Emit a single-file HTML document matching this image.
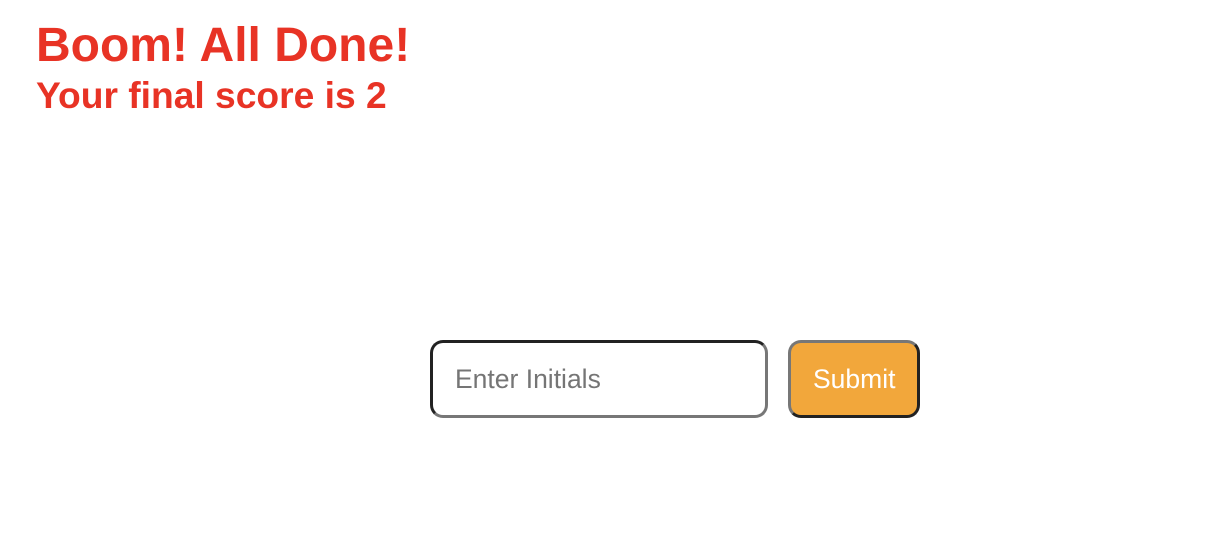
<!DOCTYPE html>
<html><head><meta charset="utf-8"><style>
html,body{margin:0;padding:0;background:#fff;width:1214px;height:542px;overflow:hidden;font-family:"Liberation Sans",Arial,sans-serif;}
h1,h2{position:absolute;left:36px;margin:0;color:#e83325;font-weight:bold;white-space:nowrap;}
h1{font-size:48px;top:18px;line-height:56px;}
h2{font-size:37.2px;top:73px;line-height:44px;}
.inp{position:absolute;left:430px;top:340px;width:332px;height:72px;box-sizing:content-box;border:3px solid;border-color:#222 #777 #777 #222;border-radius:13px;background:#fff;}
.inp span{position:absolute;left:22px;top:21px;font-size:26.5px;color:#757575;}
.btn{position:absolute;left:788px;top:340px;width:126px;height:72px;border:3px solid;border-color:#777 #222 #222 #777;border-radius:13px;background:#f2a73b;}
.btn span{position:absolute;left:22px;top:21px;font-size:26.5px;color:#fff;}
</style></head><body>
<h1>Boom! All Done!</h1>
<h2>Your final score is 2</h2>
<div class="inp"><span>Enter Initials</span></div>
<div class="btn"><span>Submit</span></div>
</body></html>
